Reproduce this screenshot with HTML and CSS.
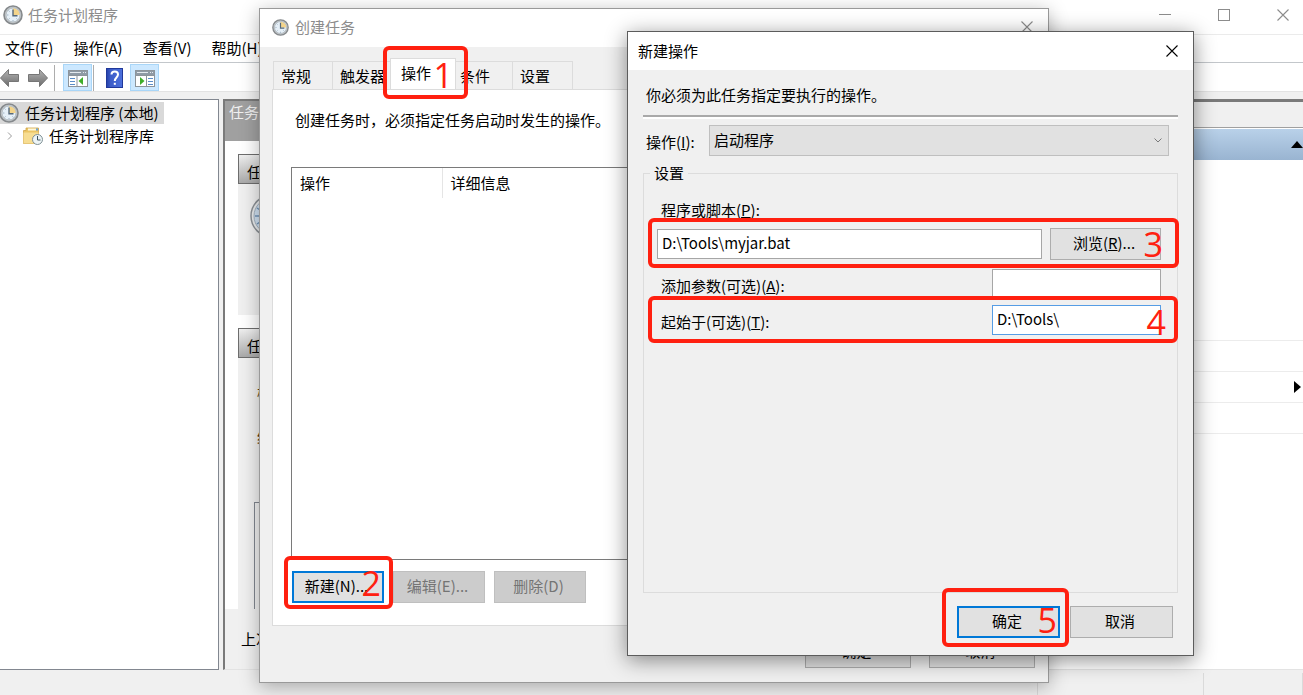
FILE: index.html
```html
<!DOCTYPE html>
<html lang="zh-CN">
<head>
  <meta charset="UTF-8" />
  <meta name="viewport" content="width=device-width, initial-scale=1.0" />
  <title>任务计划程序</title>
  <link rel="stylesheet" href="styles.css">
</head>
<body>
  <!-- Shared icons -->
  <svg class="defs" width="0" height="0" aria-hidden="true">
    <defs>
      <linearGradient id="arrowFill" x1="0" y1="0" x2="0" y2="1">
        <stop offset="0" stop-color="#b4b4b4" />
        <stop offset="1" stop-color="#6c6c6c" />
      </linearGradient>
      <linearGradient id="helpFill" x1="0" y1="0" x2="1" y2="0">
        <stop offset="0" stop-color="#2440a8" />
        <stop offset="0.25" stop-color="#3c5cc8" />
        <stop offset="1" stop-color="#4c70dc" />
      </linearGradient>
    </defs>
    <symbol id="clock" viewBox="0 0 20 20">
      <circle cx="10" cy="10" r="9" fill="#c4c8cb" stroke="#85898c" stroke-width="1.6" />
      <circle cx="10" cy="10" r="7" fill="#e6f0f8" stroke="#aab2b8" stroke-width="0.8" />
      <path d="M10 10V3.2A6.8 6.8 0 0 1 16.8 10Z" fill="#f3d48b" />
      <path d="M10 4.5V10.8H14.5" fill="none" stroke="#55697c" stroke-width="1.4" />
      <path d="M4 10h1.4M10 15v1.4M5.6 5.6l1 1M5.6 14.4l1-1M14.4 14.4l-1-1" stroke="#8fa3b5" stroke-width="0.8" />
    </symbol>
    <symbol id="close" viewBox="0 0 12 12">
      <path d="M0.5 0.5L11.5 11.5M11.5 0.5L0.5 11.5" fill="none" stroke="currentColor" stroke-width="1.1" />
    </symbol>
  </svg>

  <div class="desktop">
    <!-- Main window -->
    <main class="window">
      <header class="titlebar">
        <svg class="icon20"><use href="#clock" /></svg>
        <span class="titlebar-text">任务计划程序</span>
        <button class="win-btn" aria-label="最小化"><svg width="12" height="12"><path d="M0 5.5H12" stroke="#8c8c8c" /></svg></button>
        <button class="win-btn" aria-label="最大化"><svg width="12" height="12"><rect x="0.5" y="0.5" width="11" height="11" fill="none" stroke="#8c8c8c" /></svg></button>
        <button class="win-btn" aria-label="关闭"><svg width="12" height="12"><use href="#close" /></svg></button>
      </header>
      <nav class="menubar">
        <a href="#">文件(F)</a>
        <a href="#">操作(A)</a>
        <a href="#">查看(V)</a>
        <a href="#">帮助(H)</a>
      </nav>
      <div class="toolbar">
        <button class="tool" aria-label="后退">
          <svg width="20" height="20"><path d="M0.5 10L8.5 1.5V6.5H18.5V13.5H8.5V18.5Z" fill="url(#arrowFill)" stroke="#767676" /></svg>
        </button>
        <button class="tool" aria-label="前进">
          <svg width="20" height="20"><path d="M19.5 10L11.5 1.5V6.5H0.5V13.5H11.5V18.5Z" fill="url(#arrowFill)" stroke="#767676" /></svg>
        </button>
        <span class="tool-sep"></span>
        <button class="tool tool-on" aria-label="显示/隐藏控制台树">
          <svg width="20" height="17">
            <rect x="0.5" y="0.5" width="19" height="16" fill="#fff" stroke="#8d949b" />
            <path d="M1 1H19V5H1Z" fill="#8f9aa5" />
            <path d="M2 2.5H13M15 2.5h1M17 2.5h1" stroke="#e4e9ee" />
            <path d="M9 6V16M1 5.5H19" stroke="#8d949b" />
            <path d="M2 8.5H7M2 11.5H7M2 14.5H7" stroke="#5b8dc9" />
            <path d="M15 7V15L10.5 11Z" fill="#3fae2a" />
          </svg>
        </button>
        <span class="tool-sep"></span>
        <button class="tool tool-help" aria-label="帮助">
          <svg width="17" height="20">
            <rect x="0.5" y="0.5" width="16" height="19" fill="url(#helpFill)" stroke="#20389a" />
            <path d="M5.5 6.5C5.5 2.5 12 2.5 12 6.5C12 9.5 8.8 9.5 8.8 13" fill="none" stroke="#fff" stroke-width="2" />
            <rect x="7.8" y="14.8" width="2" height="2" fill="#fff" />
          </svg>
        </button>
        <button class="tool tool-on" aria-label="显示/隐藏操作窗格">
          <svg width="20" height="17">
            <rect x="0.5" y="0.5" width="19" height="16" fill="#fff" stroke="#8d949b" />
            <path d="M1 1H19V5H1Z" fill="#8f9aa5" />
            <path d="M2 2.5H13M15 2.5h1M17 2.5h1" stroke="#e4e9ee" />
            <path d="M11.5 6V16M1 5.5H19" stroke="#8d949b" />
            <path d="M13 8.5H18M13 11.5H18M13 14.5H18" stroke="#5b8dc9" />
            <path d="M5 7V15L9.5 11Z" fill="#3fae2a" />
          </svg>
        </button>
      </div>

      <div class="panes">
        <section class="tree">
          <div class="tree-row tree-root">
            <svg class="icon20"><use href="#clock" /></svg>
            <span>任务计划程序 (本地)</span>
          </div>
          <div class="tree-row tree-child">
            <svg width="6" height="8"><path d="M1 0.5L4.5 4L1 7.5" fill="none" stroke="#9a9a9a" /></svg>
            <svg class="folder" width="20" height="18" viewBox="0 0 20 18">
              <path d="M0.5 16.5V3.5H3V1H15.5V16.5Z" fill="#ecc564" stroke="#cfa54a" stroke-width="0.8" />
              <path d="M5 1.5h8v2H5z" fill="#fff8dc" />
              <path d="M13 1.5h2v2h-2z" fill="#6aa5dc" />
              <path d="M0.5 5.5H15.5V16.5H0.5Z" fill="#f7dd92" />
              <circle cx="14.5" cy="12.5" r="5" fill="#edf4f6" stroke="#7f9095" />
              <path d="M14.5 9V13H17.5" fill="none" stroke="#3f5560" />
            </svg>
            <span>任务计划程序库</span>
          </div>
        </section>

        <section class="summary">
          <h1 class="summary-title">任务计划程序摘要</h1>
          <div class="summary-body">
            <div class="group">
              <h2 class="group-title">任务计划程序概述</h2>
              <div class="group-content overview">
                <svg width="44" height="44" viewBox="0 0 44 44">
                  <circle cx="22" cy="22" r="21" fill="#e9ebec" stroke="#8b9095" stroke-width="1.5" />
                  <circle cx="22" cy="22" r="18" fill="#cfe0f0" stroke="#a4b2bf" />
                  <path d="M5 22h4M7 14l3 2M7 30l3-2M12 8l3 4M12 36l3-4" stroke="#7193b5" stroke-width="1.5" />
                </svg>
              </div>
            </div>
            <div class="group group-grow">
              <h2 class="group-title">任务状态</h2>
              <div class="group-content status">
                <p>概要</p>
                <p>结果</p>
                <div class="status-list"></div>
              </div>
            </div>
          </div>
          <div class="refresh-bar">上次刷新时间</div>
        </section>

        <aside class="actions">
          <div class="actions-head"></div>
          <div class="actions-group"><svg width="12" height="7"><path d="M0 7L6 0L12 7Z" /></svg></div>
          <ul class="actions-list">
            <li></li>
            <li><svg width="7" height="12"><path d="M0 0L7 6L0 12Z" /></svg></li>
            <li></li>
          </ul>
        </aside>
      </div>
      <footer class="statusbar"><span></span><span></span><span></span></footer>
    </main>

    <!-- Create task -->
    <div class="dialog dialog-task" role="dialog" aria-label="创建任务">
      <header class="dialog-title">
        <svg class="icon16"><use href="#clock" /></svg>
        <span class="dialog-name">创建任务</span>
        <button class="win-btn" aria-label="关闭"><svg width="12" height="12"><use href="#close" /></svg></button>
      </header>
      <div class="task-body">
        <div class="tabs" role="tablist">
          <button class="tab" role="tab">常规</button>
          <button class="tab" role="tab">触发器</button>
          <div class="tab-marked">
            <button class="tab tab-active" role="tab" aria-selected="true">操作</button>
            <div class="mark mark-tab">1</div>
          </div>
          <button class="tab" role="tab">条件</button>
          <button class="tab" role="tab">设置</button>
        </div>
        <div class="tab-page">
          <p class="tab-note">创建任务时，必须指定任务启动时发生的操作。</p>
          <div class="list-box">
            <table class="list">
              <thead>
                <tr><th class="col-action">操作</th><th>详细信息</th></tr>
              </thead>
            </table>
          </div>
          <div class="page-buttons">
            <div class="marked">
              <button class="btn btn-default">新建(N)...</button>
              <div class="mark mark-new">2</div>
            </div>
            <button class="btn" disabled>编辑(E)...</button>
            <button class="btn" disabled>删除(D)</button>
          </div>
        </div>
        <div class="task-footer">
          <button class="btn">确定</button>
          <button class="btn">取消</button>
        </div>
      </div>
    </div>

    <!-- New action -->
    <div class="dialog dialog-action" role="dialog" aria-label="新建操作">
      <header class="dialog-title">
        <span class="dialog-name">新建操作</span>
        <button class="win-btn" aria-label="关闭"><svg width="12" height="12"><use href="#close" /></svg></button>
      </header>
      <form class="action-body">
        <p class="action-note">你必须为此任务指定要执行的操作。</p>
        <div class="action-type">
          <label for="type">操作(<u>I</u>):</label>
          <div class="select-wrap">
            <select id="type"><option>启动程序</option></select>
            <svg width="8" height="5"><path d="M0.5 0.5L4 4L7.5 0.5" fill="none" stroke="#7a7a7a" /></svg>
          </div>
        </div>
        <fieldset class="settings">
          <legend>设置</legend>
          <label class="program-label" for="program">程序或脚本(<u>P</u>):</label>
          <div class="program-row">
            <input type="text" id="program" value="D:\Tools\myjar.bat">
            <button type="button" class="btn">浏览(<u>R</u>)...</button>
            <div class="mark mark-program">3</div>
          </div>
          <div class="field-row">
            <label for="arguments">添加参数(可选)(<u>A</u>):</label>
            <input type="text" id="arguments">
          </div>
          <div class="field-row">
            <label for="start">起始于(可选)(<u>T</u>):</label>
            <input type="text" id="start" class="focused" value="D:\Tools\">
            <div class="mark mark-start">4</div>
          </div>
        </fieldset>
        <div class="action-footer">
          <div class="marked">
            <button type="button" class="btn btn-default">确定</button>
            <div class="mark mark-ok">5</div>
          </div>
          <button type="button" class="btn">取消</button>
        </div>
      </form>
    </div>
  </div>
</body>
</html>
```

FILE: styles.css
```css
* {
  box-sizing: border-box;
}
body {
  margin: 0;
  font-family: "Noto Sans CJK SC", sans-serif;
  font-size: 15px;
  line-height: 22px;
  color: #000;
  background: #f0f0f0;
}
button, input, select {
  font: inherit;
  color: inherit;
}
h1, h2, p, ul {
  margin: 0;
  padding: 0;
  font-size: 15px;
  font-weight: normal;
}
svg {
  display: block;
  flex: none;
}
.defs {
  position: absolute;
}
.icon20 {
  width: 20px;
  height: 20px;
}
.icon16 {
  width: 17px;
  height: 17px;
}
.desktop {
  position: relative;
  height: 100vh;
  min-height: 695px;
  overflow: hidden;
}

/* Main window */
.window {
  display: flex;
  flex-direction: column;
  height: 100%;
}
.titlebar {
  display: flex;
  align-items: center;
  height: 35px;
  padding: 0 14px 5px 3px;
  background: #fff;
  border-bottom: 1px solid #ebebeb;
}
.titlebar-text {
  flex: 1;
  margin-left: 5px;
  color: #8c8c8c;
}
.win-btn {
  padding: 0;
  border: none;
  background: none;
  color: #8c8c8c;
}
.titlebar .win-btn {
  margin-left: 47px;
}
.menubar {
  display: flex;
  gap: 20px;
  height: 28px;
  padding: 2px 5px;
  background: #fff;
  border-bottom: 1px solid #c3c7cb;
}
.menubar a {
  color: #000;
  text-decoration: none;
}
.toolbar {
  display: flex;
  align-items: center;
  height: 29px;
  padding-top: 1px;
  background: #fff;
  border-bottom: 1px solid #e3e3e3;
}
.tool {
  display: flex;
  align-items: center;
  justify-content: center;
  width: 28px;
  height: 27px;
  padding: 0 8px 0 0;
  border: none;
  background: none;
}
.tool-sep {
  width: 1px;
  height: 26px;
  margin: 0 8px 0 -2px;
  background: #adadad;
}
.tool-on {
  width: 29px;
  padding: 2px 0 0;
  border: 1px solid #a9d6f8;
  background: #cce8ff;
}
.tool-on + .tool-sep {
  margin-left: 1px;
}
.tool-help {
  padding: 0 3px 0 0;
}
.panes {
  flex: 1;
  display: flex;
  gap: 4px;
  padding-top: 7px;
  min-height: 0;
}
.tree {
  flex: none;
  width: 219px;
  background: #fff;
  border: 1px solid #828790;
  border-left: none;
  padding-top: 2px;
}
.tree-row {
  display: flex;
  align-items: center;
  height: 22px;
}
.tree-root {
  width: 164px;
  gap: 6px;
  background: #d9d9d9;
  white-space: nowrap;
}
.tree-root .icon20 {
  margin-left: -1px;
}
.tree-child {
  height: 24px;
  padding-left: 7px;
}
.folder {
  margin: 0 6px 0 10px;
}
.summary {
  flex: 1;
  display: flex;
  flex-direction: column;
  border-top: 2px solid #7a7a7a;
  border-left: 2px solid #7a7a7a;
  border-bottom: 1px solid #e3e3e3;
  background: #fff;
  min-width: 0;
}
.summary-title {
  height: 40px;
  padding-left: 4px;
  background: #a0a0a0;
  color: #f0f0f0;
}
.summary-body {
  flex: 1;
  display: flex;
  flex-direction: column;
  gap: 13px;
  padding: 13px 13px 0;
}
.group {
  display: flex;
  flex-direction: column;
}
.group-grow {
  flex: 1;
}
.group-title {
  height: 30px;
  padding: 6px 8px 0;
  line-height: 22px;
  border: 1px solid #6e6e6e;
  background: linear-gradient(#efefef, #a9a9a9);
}
.group-content {
  flex: 1;
  background: #f0f0f0;
}
.overview {
  flex: none;
  height: 131px;
  padding: 10px 12px;
}
.status {
  display: flex;
  flex-direction: column;
  gap: 23px;
  padding: 23px 16px 0;
}
.status p {
  padding-left: 3px;
  color: #5a3a10;
}
.status-list {
  flex: 1;
  margin-top: 31px;
  border: 1px solid #828790;
  border-bottom: none;
}
.refresh-bar {
  height: 60px;
  padding: 19px 16px;
  background: #f0f0f0;
}
.actions {
  flex: none;
  width: 260px;
  border-top: 3px solid #7a7a7a;
  border-bottom: 1px solid #e3e3e3;
  background: #fff;
}
.actions-head {
  height: 26px;
  background: #f0f0f0;
  border-bottom: 1px solid #a0a0a0;
}
.actions-group {
  display: flex;
  justify-content: flex-end;
  align-items: center;
  height: 32px;
  border-top: 1px solid #fff;
  background: linear-gradient(#b9d1e9, #99b4d1);
}
.actions-list {
  margin-top: 180px;
  list-style: none;
  border-top: 1px solid #ececec;
}
.actions-list li {
  display: flex;
  align-items: center;
  justify-content: flex-end;
  height: 31px;
  padding-right: 2px;
  border-bottom: 1px solid #ececec;
}
.statusbar {
  display: grid;
  grid-template-columns: 1fr 166px 99px;
  height: 25px;
  padding-top: 3px;
}
.statusbar span {
  border-right: 1px solid #dadada;
}

/* Dialogs */
.dialog {
  position: absolute;
  background: #f0f0f0;
  border: 1px solid #999;
  box-shadow: 0 4px 18px rgba(0, 0, 0, 0.3);
}
.dialog-task {
  left: 259px;
  right: 254px;
  top: 8px;
}
.dialog-action {
  left: 627px;
  right: 109px;
  top: 31px;
  border-color: #5c5c5c;
  box-shadow: 0 4px 20px rgba(0, 0, 0, 0.45);
}
.dialog-title {
  display: flex;
  align-items: center;
  height: 38px;
  background: #fff;
}
.dialog-name {
  flex: 1;
}
.dialog-task .dialog-title {
  padding: 0 15px 2px 12px;
  gap: 6px;
  color: #8c8c8c;
}
.dialog-action .dialog-title {
  padding: 0 15px 1px 10px;
}
.dialog-action .win-btn {
  color: #000;
}
.btn {
  height: 32px;
  padding: 0 3px 2px 0;
  border: 1px solid #adadad;
  background: #e1e1e1;
}
.btn-default {
  border: 2px solid #0078d7;
}
.btn:disabled {
  color: #747474;
  border-color: #bfbfbf;
  background: #ccc;
}

/* Create task dialog */
.task-body {
  padding: 11px 13px 14px 12px;
}
.tabs {
  display: flex;
  align-items: flex-end;
  height: 31px;
  padding-left: 1px;
}
.tab {
  height: 28px;
  width: 60px;
  padding: 0 7px;
  text-align: left;
  white-space: nowrap;
  border: 1px solid #dcdcdc;
  border-left: none;
  border-bottom: none;
  background: #f0f0f0;
}
.tab:first-child {
  border-left: 1px solid #dcdcdc;
}
.tab-marked {
  position: relative;
  z-index: 1;
  margin: 0 -3px;
}
.tab-active {
  display: block;
  width: 66px;
  height: 31px;
  padding: 0 10px 2px;
  border-left: 1px solid #dcdcdc;
  background: #fff;
}
.tab-page {
  padding: 19px 12px 22px 18px;
  border: 1px solid #dcdcdc;
  background: #fff;
}
.tab-note {
  padding-left: 4px;
}
.list-box {
  height: 393px;
  margin-top: 36px;
  border: 1px solid #7a7a7a;
}
.list {
  width: 100%;
  border-collapse: collapse;
}
.list th {
  height: 30px;
  padding: 0 8px 1px;
  font-weight: normal;
  text-align: left;
}
.list .col-action {
  width: 150px;
  border-right: 1px solid #e5e5e5;
}
.page-buttons {
  display: flex;
  gap: 9px;
  margin-top: 11px;
  padding-left: 1px;
}
.page-buttons .btn {
  width: 92px;
}
.task-footer {
  display: flex;
  justify-content: flex-end;
  gap: 18px;
  margin-top: 10px;
}
.task-footer .btn {
  width: 106px;
}

/* New action dialog */
.action-body {
  padding: 14px 15px 17px;
}
.action-note {
  padding: 0 3px 9px;
  border-bottom: 2px solid #a9a9a9;
  box-shadow: 0 2px #fff;
}
.action-type {
  display: flex;
  gap: 13px;
  margin-top: 8px;
  padding: 0 9px 0 3px;
}
.action-type label {
  width: 50px;
  padding-top: 6px;
  white-space: nowrap;
}
.select-wrap {
  flex: 1;
  position: relative;
}
.select-wrap select {
  display: block;
  width: 100%;
  height: 31px;
  padding: 0 4px 1px;
  appearance: none;
  border: 1px solid #bfbfbf;
  border-radius: 0;
  background: #e1e1e1;
}
.select-wrap svg {
  position: absolute;
  right: 7px;
  top: 13px;
  pointer-events: none;
}
.settings {
  height: 431px;
  margin: 6px 0 0;
  padding: 15px 16px 0 13px;
  border: 1px solid #dcdcdc;
}
.settings legend {
  margin-left: -7px;
  padding: 0 4px;
}
.settings label {
  padding-left: 4px;
}
.settings input {
  height: 30px;
  padding: 0 4px 3px;
  border: 1px solid #a6a6a6;
  background: #fff;
}
.settings input.focused {
  border-color: #569de5;
}
.program-label {
  display: block;
}
.program-row {
  display: flex;
  align-items: center;
  gap: 8px;
  position: relative;
  margin-top: 7px;
}
.program-row input {
  flex: 1;
  min-width: 0;
}
.program-row .btn {
  width: 111px;
}
.field-row {
  display: flex;
  align-items: center;
  justify-content: space-between;
  position: relative;
  margin-top: 9px;
}
.field-row label {
  padding-top: 3px;
}
.field-row input {
  width: 169px;
}
.field-row + .field-row {
  margin-top: 6px;
}
.action-footer {
  display: flex;
  justify-content: flex-end;
  gap: 10px;
  margin-top: 13px;
  padding-right: 5px;
}
.action-footer .btn {
  width: 103px;
}

/* Numbered red boxes over the steps */
.marked {
  position: relative;
}
.mark {
  position: absolute;
  z-index: 1;
  display: flex;
  align-items: center;
  justify-content: flex-end;
  border: 4px solid #ff2010;
  border-radius: 6px;
  font-family: "Open Sans", sans-serif;
  font-size: 34px;
  line-height: 34px;
  color: #ff2010;
  pointer-events: none;
}
.mark-tab {
  inset: -12px -12px -10px -7px;
  padding: 4px 11px 0 0;
}
.mark-new {
  inset: -15px -9px -6px -8px;
  padding-right: 8px;
}
.mark-program {
  inset: -10px -18px -8px -9px;
  padding: 2px 12px 0 0;
}
.mark-start {
  inset: -9px -17px -8px -9px;
  padding: 4px 8px 0 0;
}
.mark-ok {
  inset: -18px -9px -9px -15px;
  padding: 4px 8px 0 0;
}
```
